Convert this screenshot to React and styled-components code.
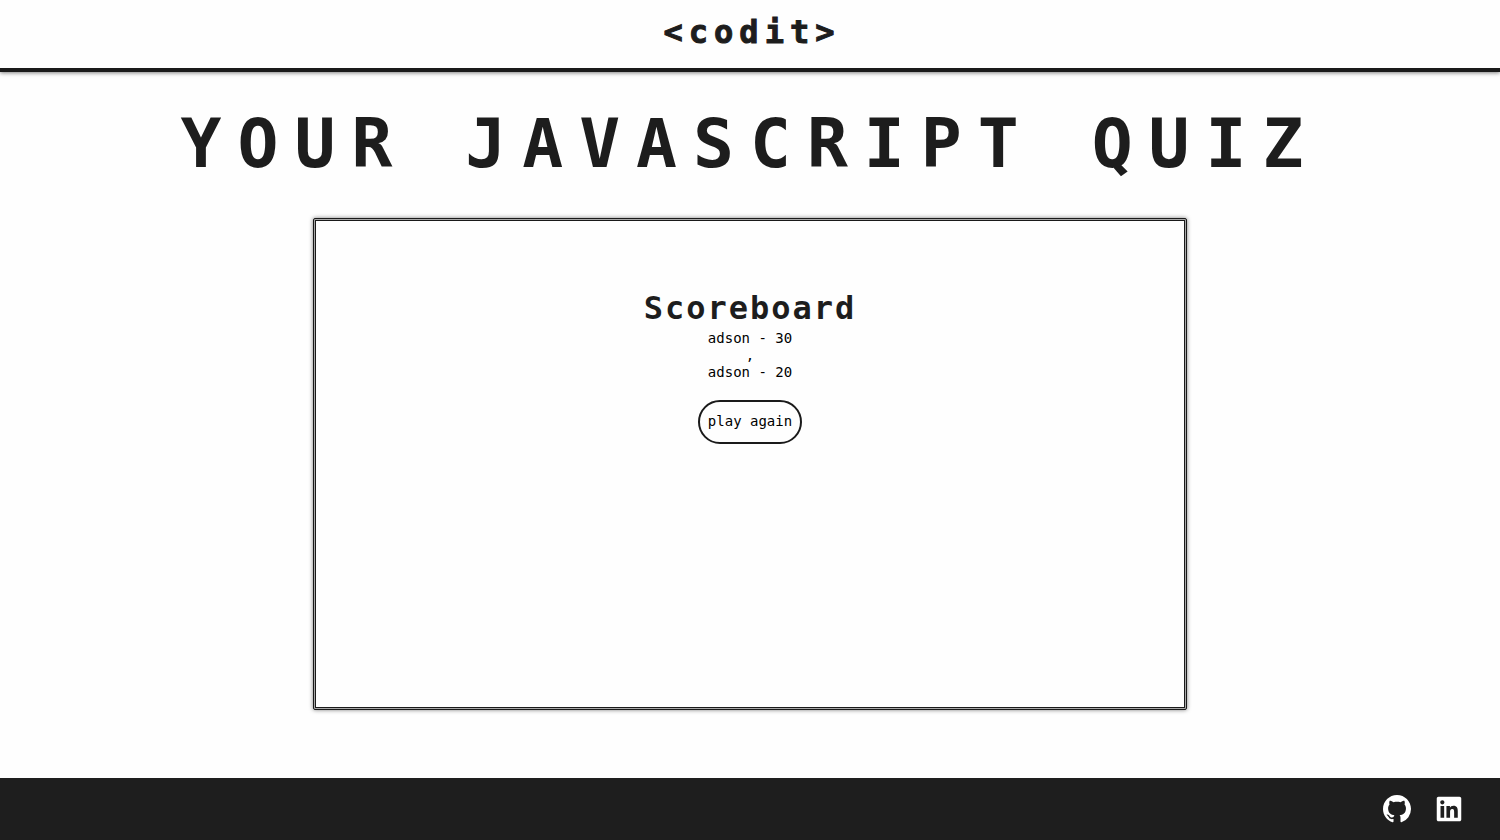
import React from "react";
import styled, { createGlobalStyle } from "styled-components";
import { FaLinkedin } from "react-icons/fa";

const mono = '"DejaVu Sans Mono", monospace';

const GlobalStyle = createGlobalStyle`
  * { box-sizing: border-box; }
  body { margin: 0; background: #fefefe; color: #1d1d1d; font-family: ${mono}; }
`;

const Page = styled.div`
  min-height: 100vh;
  display: flex;
  flex-direction: column;
`;

const Header = styled.header`
  height: 72px;
  padding-bottom: 4px;
  display: flex;
  align-items: center;
  justify-content: center;
  background: #fefefe;
  border-bottom: 4px solid #1a1a1a;
  box-shadow: 0 1px 4px rgba(0, 0, 0, 0.5);
`;

const Logo = styled.a`
  color: #1d1d1d;
  font: bold 32px/40px ${mono};
  letter-spacing: 6px;
  padding-left: 4px;
  text-decoration: none;
  -webkit-text-stroke: 1px #1d1d1d;
`;

const Main = styled.main`
  flex: 1;
  display: flex;
  flex-direction: column;
  align-items: center;
`;

const Title = styled.h1`
  margin: 28px 0 30px;
  font-size: 68px;
  line-height: 88px;
  letter-spacing: 16px;
  font-weight: bold;
  text-align: center;
  text-transform: uppercase;
`;

const Board = styled.section`
  width: 90%;
  max-width: 874px;
  min-height: 492px;
  padding: 65px 16px;
  display: flex;
  flex-direction: column;
  align-items: center;
  border: 3px double #1a1a1a;
  border-radius: 2px;
  background: linear-gradient(#fefefe, #fefefe) padding-box, #a8a8a8 border-box;
  box-shadow: 0 0 4px rgba(0, 0, 0, 0.5);
`;

const BoardTitle = styled.h2`
  margin: 0;
  font-size: 32px;
  line-height: 44px;
  letter-spacing: 2px;
`;

const Scores = styled.div`
  color: #000;
  font-size: 14px;
  line-height: 17px;
  text-align: center;
`;

const Score = styled.p`
  margin: 0;
`;

const PlayButton = styled.button`
  margin-top: 19px;
  padding: 0 8px 2px;
  height: 44px;
  color: #000;
  background: transparent;
  border: 2px solid #1a1a1a;
  border-radius: 22px;
  font: 14px/20px ${mono};
  cursor: pointer;
`;

const Footer = styled.footer`
  height: 62px;
  padding: 0 37px;
  display: flex;
  align-items: center;
  justify-content: flex-end;
  gap: 24px;
  background: #1e1e1e;
`;

const SocialLink = styled.a`
  display: flex;
  color: #fff;
`;

const GitHubMark = () => (
  <svg width="28" height="28" viewBox="0 0 16 16" fill="currentColor" aria-hidden="true">
    <path d="M8 0C3.58 0 0 3.58 0 8c0 3.54 2.29 6.53 5.47 7.59.4.07.55-.17.55-.38 0-.19-.01-.82-.01-1.49-2.01.37-2.53-.49-2.69-.94-.09-.23-.48-.94-.82-1.13-.28-.15-.68-.52-.01-.53.63-.01 1.08.58 1.23.82.72 1.21 1.87.87 2.33.66.07-.52.28-.87.51-1.07-1.78-.2-3.64-.89-3.64-3.95 0-.87.31-1.59.82-2.15-.08-.2-.36-1.02.08-2.12 0 0 .67-.21 2.2.82.64-.18 1.32-.27 2-.27s1.36.09 2 .27c1.53-1.04 2.2-.82 2.2-.82.44 1.1.16 1.92.08 2.12.51.56.82 1.27.82 2.15 0 3.07-1.87 3.75-3.65 3.95.29.25.54.73.54 1.48 0 1.07-.01 1.93-.01 2.2 0 .21.15.46.55.38A8.01 8.01 0 0 0 16 8c0-4.42-3.58-8-8-8z" />
  </svg>
);

const scores = [
  { name: "adson", points: 30 },
  { name: "adson", points: 20 },
];

export default function App() {
  return (
    <Page>
      <GlobalStyle />
      <Header>
        <Logo href="#">&lt;codit&gt;</Logo>
      </Header>
      <Main>
        <Title>Your JavaScript Quiz</Title>
        <Board>
          <BoardTitle>Scoreboard</BoardTitle>
          <Scores>
            {scores.map((score, i) => (
              <React.Fragment key={i}>
                {i > 0 && ","}
                <Score>{`${score.name} - ${score.points}`}</Score>
              </React.Fragment>
            ))}
          </Scores>
          <PlayButton type="button">play again</PlayButton>
        </Board>
      </Main>
      <Footer>
        <SocialLink href="#" aria-label="GitHub">
          <GitHubMark />
        </SocialLink>
        <SocialLink href="#" aria-label="LinkedIn">
          <FaLinkedin size={28} />
        </SocialLink>
      </Footer>
    </Page>
  );
}
